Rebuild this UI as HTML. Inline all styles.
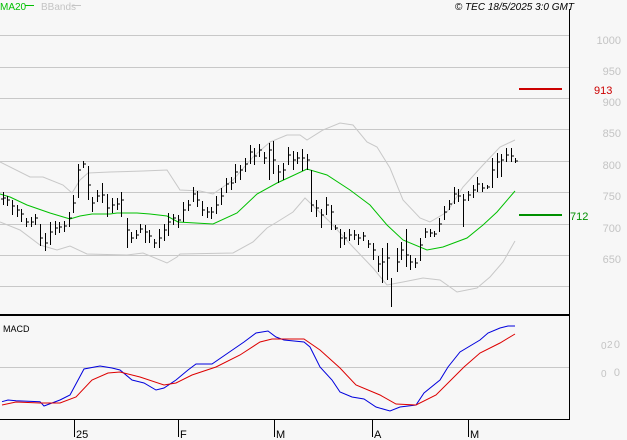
<!DOCTYPE html>
<html><head><meta charset="utf-8"><style>
html,body{margin:0;padding:0;background:#f7f7f7;}
svg{display:block;font-family:"Liberation Sans",sans-serif;}
</style></head><body>
<svg width="627" height="440" viewBox="0 0 627 440" xmlns="http://www.w3.org/2000/svg">
<rect width="627" height="440" fill="#f7f7f7"/>
<g stroke="#c8c8c8" stroke-width="1">
<path d="M0 35.5H569M0 67.5H569M0 98.5H569M0 129.5H569M0 161.5H569M0 192.5H569M0 224.5H569M0 255.5H569M0 286.5H569M0 367.5H569"/>
</g>
<g fill="#c4c4c4" font-size="11" text-anchor="end">
<text x="621" y="44">1000</text><text x="621" y="75">950</text><text x="621" y="106">900</text><text x="621" y="137">850</text><text x="621" y="169">800</text><text x="621" y="200">750</text><text x="621" y="232">700</text><text x="621" y="263">650</text>
<text x="620" y="348">0</text><text x="620" y="376">0</text>
</g>
<g fill="#c4c4c4" font-size="10"><text x="601" y="349">0</text><text x="601" y="377">0</text><text x="607" y="348">2</text></g>
<!-- bands -->
<g fill="none" stroke="#c8c8c8" stroke-width="1">
<polyline points="0,162 30,177 43,177 63,185 72,193 80,180 88,173 110,172 143,171 167,170 180,190 200,191 213,194 233,180 253,157 270,142 287,135 300,135 307,140 323,130 340,123 353,125 367,142 377,147 390,168 403,200 420,218 430,222 447,212 463,187 483,165 500,147 515,140"/>
<polyline points="0,222 20,230 40,245 57,250 70,246 87,254 127,255 143,253 167,263 177,257 180,254 233,253 253,242 267,228 277,222 293,212 305,198 330,222 353,247 373,268 387,285 403,282 423,278 440,280 457,292 477,288 490,277 503,262 515,241"/>
</g>
<polyline fill="none" stroke="#00c000" stroke-width="1" points="0,194 10,197 27,205 50,213 70,219 80,216 92,214 110,214 117,213 137,213 150,214 167,216 178,222 213,224 237,213 257,194 277,183 290,177 307,169 327,175 350,190 370,205 387,225 403,240 427,250 443,247 467,238 483,225 497,212 515,191"/>
<path fill="none" stroke="#000" stroke-width="1" d="
M3.5 192V205M1 199h2M7.5 196V206M12.5 200V215M17.5 205V217M21.5 209V222M26.5 218V227M31.5 217V227M35.5 214V225M40.5 224V246M45.5 233V251M50.5 222V245M55.5 221V235M59.5 222V233M64.5 221V232M69.5 212V227M73.5 195V213M78.5 164V198M83.5 161V168M88.5 166V200M92.5 197V212M97.5 190V202M102.5 183V203M107.5 194V217M112.5 198V213M117.5 198V210M121.5 192V217M127.5 218V248M131.5 232V243M136.5 230V239M140.5 224V233M145.5 225V243M149.5 230V243M154.5 239V248M159.5 229V248M164.5 224V241M168.5 213V236M173.5 214V225M178.5 215V228M183.5 202V222M188.5 200V211M193.5 187V202M197.5 191V207M202.5 201V216M207.5 207V218M211.5 207V219M216.5 196V214M221.5 188V205M226.5 178V193M231.5 177V190M235.5 164V183M240.5 165V180M245.5 158V172M250.5 145V164M254.5 148V165M259.5 144V157M264.5 152V164M269.5 143V180M273.5 141V174M278.5 165V183M283.5 163V180M288.5 147V165M293.5 151V170M297.5 152V164M302.5 149V171M307.5 154V170M311.5 170V212M316.5 200V217M321.5 209V228M326.5 197V215M331.5 205V230M335.5 225V230M340.5 229V248M344.5 232V245M349.5 229V241M354.5 230V240M358.5 234V245M363.5 232V241M368.5 240V248M373.5 243V260M378.5 256V272M382.5 248V283M387.5 243V280M391.5 278V307M397.5 248V272M401.5 242V260M406.5 229V267M410.5 255V270M415.5 258V268M420.5 238V261M425.5 228V238M430.5 229V237M434.5 231V237M439.5 218V232M444.5 206V220M449.5 200V210M454.5 187V204M458.5 189V202M463.5 194V227M468.5 191V201M473.5 185V198M477.5 177V192M482.5 183V192M487.5 185V189M492.5 158V188M497.5 153V178M501.5 154V177M506.5 148V162M511.5 148V162M515.5 158V163"/>
<path fill="none" stroke="#000" stroke-width="1" d="M4 198h2M8 200h2M13 206h2M18 210h2M22 214h2M27 222h2M32 222h2M36 218h2M41 238h2M46 243h2M51 232h2M56 228h2M60 227h2M65 226h2M70 218h2M74 203h2M79 170h2M84 164h2M89 185h2M93 203h2M98 196h2M103 195h2M108 208h2M113 205h2M118 204h2M122 200h2M128 230h2M132 238h2M137 235h2M141 229h2M146 232h2M150 236h2M155 243h2M160 238h2M165 230h2M169 222h2M174 218h2M179 220h2M184 210h2M189 205h2M194 194h2M198 200h2M203 210h2M208 212h2M212 212h2M217 205h2M222 196h2M227 184h2M232 183h2M236 172h2M241 170h2M246 164h2M251 152h2M255 156h2M260 150h2M265 158h2M270 150h2M274 160h2M279 172h2M284 170h2M289 155h2M294 160h2M298 158h2M303 158h2M308 160h2M312 205h2M317 208h2M322 215h2M327 205h2M332 212h2M336 228h2M341 238h2M345 238h2M350 235h2M355 235h2M359 238h2M364 236h2M369 244h2M374 250h2M379 264h2M383 262h2M388 258h2M398 262h2M402 250h2M407 255h2M411 262h2M416 263h2M421 245h2M426 232h2M431 233h2M435 234h2M440 224h2M445 212h2M450 204h2M455 194h2M459 196h2M464 200h2M469 195h2M474 190h2M478 184h2M483 188h2M488 187h2M493 170h2M498 162h2M502 160h2M507 155h2M512 156h2M516 161h2"/>
<!-- 913 / 712 markers -->
<path d="M519 89h43" stroke="#cc0000" stroke-width="2"/>
<text x="594" y="94" font-size="11" fill="#cc0000">913</text>
<path d="M519 215h43" stroke="#009000" stroke-width="2"/>
<text x="570" y="220" font-size="11" fill="#009000">712</text>
<!-- frame -->
<path d="M569.5 9V420" stroke="#000" stroke-width="1"/>
<path d="M0 315H570" stroke="#000" stroke-width="2"/>
<path d="M0 419.5H570" stroke="#000" stroke-width="1"/>
<path d="M74.5 420V437M178.5 420V437M274.5 420V437M372.5 420V437M468.5 420V437" stroke="#000" stroke-width="1"/>
<g font-size="11" fill="#000"><text x="76" y="438">25</text><text x="180" y="438">F</text><text x="276" y="438">M</text><text x="374" y="438">A</text><text x="470" y="438">M</text></g>
<!-- MACD -->
<text x="3" y="332" font-size="9" fill="#000">MACD</text>
<polyline fill="none" stroke="#0000dd" stroke-width="1" points="2,401.7 8,400 16,400.7 40,401.7 44,406 60,400 70,395 84,369 100,366 112,368 120,370 132,380 144,383 156,390 164,388 176,380 188,370 196,364 212,364 228,353 244,342 256,333 268,331 276,337 284,340 304,342 310,347 320,367 332,380 340,392 352,397 364,399 376,407 390,411 400,407 416,405 424,393 440,380 448,367 460,352 480,340 488,333 500,328 508,326 515,326"/>
<polyline fill="none" stroke="#dd0000" stroke-width="1" points="2,405 16,402 40,403 60,403 76,397 92,380 108,373 120,372 140,377 164,385 176,383 192,375 216,367 240,355 260,342 272,339 304,339 320,350 340,368 356,385 380,395 396,404 416,405 436,395 464,367 480,353 500,343 515,334"/>
<!-- header -->
<text x="0" y="10" font-size="10" fill="#00c000">MA20</text>
<path d="M25 5.5h9" stroke="#00c000" stroke-width="1"/>
<text x="41" y="10" font-size="10" fill="#c4c4c4">BBands</text>
<path d="M72 5.5h9" stroke="#c4c4c4" stroke-width="1"/>
<text x="574" y="10" font-size="10" font-style="italic" fill="#000" text-anchor="end">© TEC 18/5/2025 3:0 GMT</text>
</svg>
</body></html>
